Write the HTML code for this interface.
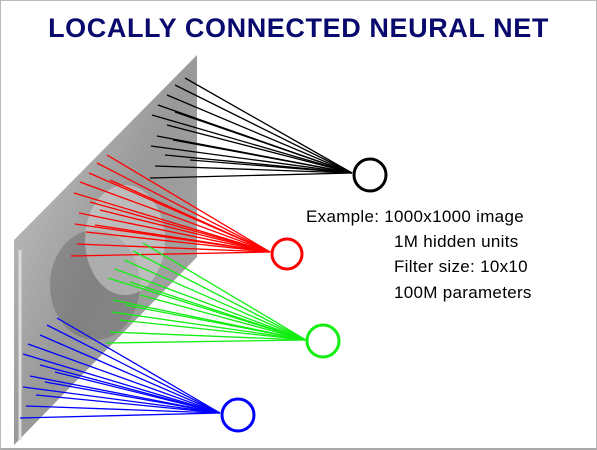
<!DOCTYPE html>
<html><head><meta charset="utf-8"><style>
html,body{margin:0;padding:0;background:#fff}
body{width:597px;height:450px;position:relative;overflow:hidden;font-family:"Liberation Sans",sans-serif}
.frame{position:absolute;left:0;top:0;width:595px;height:447px;border:1px solid #bbb;border-bottom:2px solid #aaa}
h1{position:absolute;left:0;top:13px;width:597px;text-align:center;margin:0;font-size:27px;font-weight:bold;color:#0a0a6e;letter-spacing:0.6px}
.t{position:absolute;font-size:17px;color:#000;white-space:nowrap;letter-spacing:0.3px}
</style></head><body>
<div class="frame"></div>
<h1>LOCALLY CONNECTED NEURAL NET</h1>
<svg width="597" height="450" style="position:absolute;left:0;top:0">
<defs><linearGradient id="g" x1="0" y1="0" x2="1" y2="1">
<stop offset="0" stop-color="#ccc"/><stop offset="0.5" stop-color="#999"/><stop offset="1" stop-color="#aaa"/></linearGradient></defs>
<polygon points="14,240 197,55 197,257 14,445" fill="url(#g)"/>
<ellipse cx="95" cy="285" rx="45" ry="55" fill="#666" opacity="0.45"/>
<ellipse cx="125" cy="240" rx="40" ry="55" fill="#eee" opacity="0.4"/>
<line x1="20" y1="250" x2="20" y2="440" stroke="#ddd" stroke-width="3"/>
<g stroke="#000" stroke-width="1.3">
<line x1="185" y1="78" x2="352" y2="173"/><line x1="175" y1="85" x2="352" y2="173"/><line x1="167" y1="95" x2="352" y2="173"/><line x1="158" y1="105" x2="352" y2="173"/><line x1="175" y1="112" x2="352" y2="173"/><line x1="152" y1="115" x2="352" y2="173"/><line x1="167" y1="125" x2="352" y2="173"/><line x1="157" y1="136" x2="352" y2="173"/><line x1="173" y1="140" x2="352" y2="173"/><line x1="151" y1="146" x2="352" y2="173"/><line x1="165" y1="155" x2="352" y2="173"/><line x1="155" y1="166" x2="352" y2="173"/><line x1="150" y1="178" x2="352" y2="173"/><line x1="190" y1="160" x2="352" y2="173"/>
</g>
<g stroke="#f00" stroke-width="1.3">
<line x1="107" y1="155" x2="270" y2="252"/><line x1="97" y1="163" x2="270" y2="252"/><line x1="89" y1="173" x2="270" y2="252"/><line x1="80" y1="182" x2="270" y2="252"/><line x1="74" y1="193" x2="270" y2="252"/><line x1="90" y1="202" x2="270" y2="252"/><line x1="79" y1="213" x2="270" y2="252"/><line x1="100" y1="210" x2="270" y2="252"/><line x1="75" y1="224" x2="270" y2="252"/><line x1="86" y1="232" x2="270" y2="252"/><line x1="77" y1="244" x2="270" y2="252"/><line x1="71" y1="256" x2="270" y2="252"/><line x1="95" y1="225" x2="270" y2="252"/><line x1="110" y1="180" x2="270" y2="252"/>
</g>
<g stroke="#1e1" stroke-width="1.3">
<line x1="143" y1="243" x2="306" y2="340"/><line x1="133" y1="251" x2="306" y2="340"/><line x1="124" y1="260" x2="306" y2="340"/><line x1="115" y1="269" x2="306" y2="340"/><line x1="108" y1="278" x2="306" y2="340"/><line x1="130" y1="282" x2="306" y2="340"/><line x1="113" y1="300" x2="306" y2="340"/><line x1="125" y1="305" x2="306" y2="340"/><line x1="112" y1="312" x2="306" y2="340"/><line x1="120" y1="320" x2="306" y2="340"/><line x1="110" y1="332" x2="306" y2="340"/><line x1="106" y1="343" x2="306" y2="340"/><line x1="140" y1="295" x2="306" y2="340"/>
</g>
<g stroke="#00f" stroke-width="1.3">
<line x1="57" y1="318" x2="220" y2="413"/><line x1="47" y1="325" x2="220" y2="413"/><line x1="40" y1="335" x2="220" y2="413"/><line x1="28" y1="344" x2="220" y2="413"/><line x1="23" y1="354" x2="220" y2="413"/><line x1="40" y1="365" x2="220" y2="413"/><line x1="30" y1="376" x2="220" y2="413"/><line x1="45" y1="382" x2="220" y2="413"/><line x1="23" y1="387" x2="220" y2="413"/><line x1="36" y1="395" x2="220" y2="413"/><line x1="26" y1="406" x2="220" y2="413"/><line x1="20" y1="418" x2="220" y2="413"/><line x1="55" y1="372" x2="220" y2="413"/>
</g>
<g fill="none" stroke-width="3">
<circle cx="370" cy="175" r="16" stroke="#000"/>
<circle cx="287" cy="254" r="15" stroke="#f00"/>
<circle cx="323" cy="341" r="16" stroke="#1e1"/>
<circle cx="238" cy="415" r="16" stroke="#00f"/>
</g>
</svg>
<div class="t" style="left:306px;top:207px">Example: 1000x1000 image</div>
<div class="t" style="left:394px;top:232px">1M hidden units</div>
<div class="t" style="left:394px;top:257px">Filter size: 10x10</div>
<div class="t" style="left:394px;top:283px">100M parameters</div>
</body></html>
